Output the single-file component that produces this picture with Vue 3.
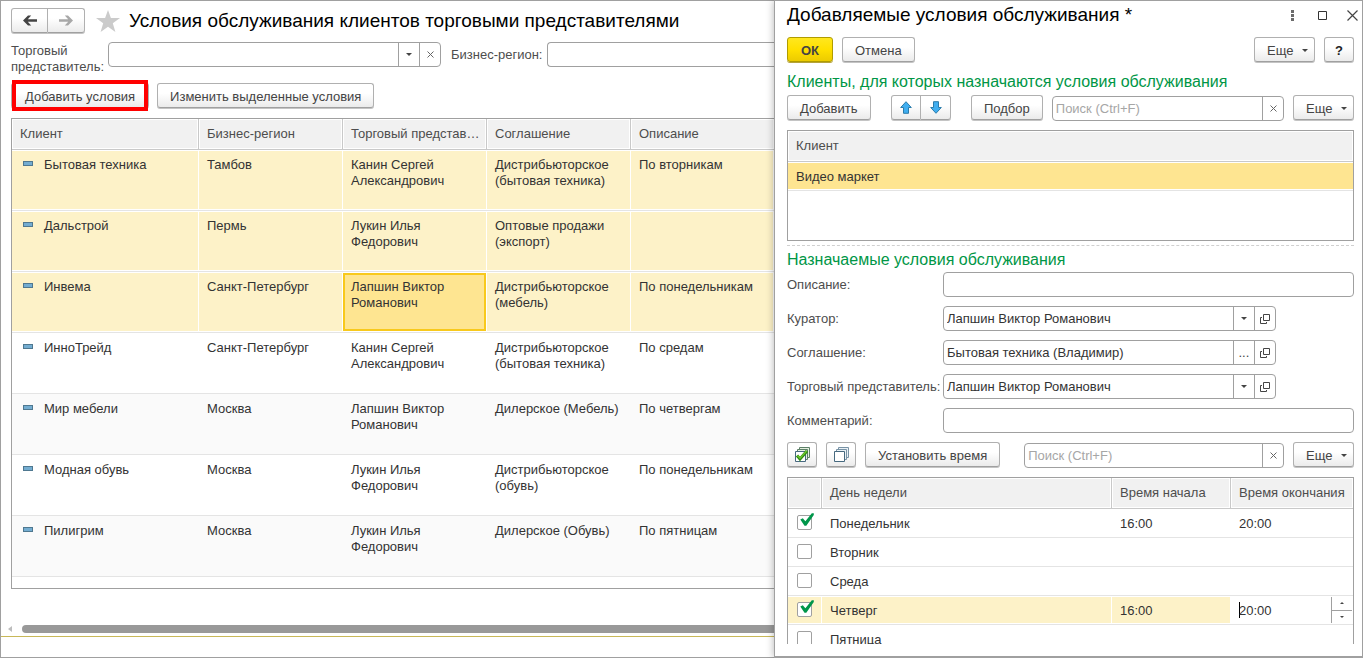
<script setup>
import { ref } from 'vue'

const rows = ref([
  { client: 'Бытовая техника', region: 'Тамбов', agent: 'Канин Сергей Александрович', deal: 'Дистрибьюторское (бытовая техника)', note: 'По вторникам', selected: true },
  { client: 'Дальстрой', region: 'Пермь', agent: 'Лукин Илья Федорович', deal: 'Оптовые продажи (экспорт)', note: '', selected: true },
  { client: 'Инвема', region: 'Санкт-Петербург', agent: 'Лапшин Виктор Романович', deal: 'Дистрибьюторское (мебель)', note: 'По понедельникам', selected: true, current: true },
  { client: 'ИнноТрейд', region: 'Санкт-Петербург', agent: 'Канин Сергей Александрович', deal: 'Дистрибьюторское (бытовая техника)', note: 'По средам' },
  { client: 'Мир мебели', region: 'Москва', agent: 'Лапшин Виктор Романович', deal: 'Дилерское (Мебель)', note: 'По четвергам', alt: true },
  { client: 'Модная обувь', region: 'Москва', agent: 'Лукин Илья Федорович', deal: 'Дистрибьюторское (обувь)', note: 'По понедельникам' },
  { client: 'Пилигрим', region: 'Москва', agent: 'Лукин Илья Федорович', deal: 'Дилерское (Обувь)', note: 'По пятницам', alt: true },
])

const fields = ref([
  { id: 'description', label: 'Описание:', value: '' },
  { id: 'curator', label: 'Куратор:', value: 'Лапшин Виктор Романович', picker: 'list' },
  { id: 'agreement', label: 'Соглашение:', value: 'Бытовая техника (Владимир)', picker: 'dots' },
  { id: 'agent', label: 'Торговый представитель:', value: 'Лапшин Виктор Романович', picker: 'list' },
  { id: 'comment', label: 'Комментарий:', value: '' },
])

const days = ref([
  { name: 'Понедельник', on: true, from: '16:00', to: '20:00' },
  { name: 'Вторник', on: false, from: '', to: '' },
  { name: 'Среда', on: false, from: '', to: '' },
  { name: 'Четверг', on: true, from: '16:00', to: '20:00', editing: true },
  { name: 'Пятница', on: false, from: '', to: '' },
])
</script>

<template>
  <div class="desktop">
    <main class="list-form">
      <header class="nav">
        <div class="pair">
          <button class="btn" type="button" aria-label="Назад">
            <svg width="14" height="11" viewBox="0 0 14 11"><path d="M0 5.500 5 .5H8.200L4.800 4.300H14V6.700H4.800L8.200 10.500H5Z" fill="#444" /></svg>
          </button>
          <button class="btn" type="button" aria-label="Вперед">
            <svg width="14" height="11" viewBox="0 0 14 11"><path d="M14 5.500 9 .5H5.800L9.200 4.300H0V6.700H9.200L5.800 10.500H9Z" fill="#a8a8a8" /></svg>
          </button>
        </div>
        <svg class="star" width="24" height="22" viewBox="0 0 24 22"><path d="M12 0 14.900 8H24L16.800 13.200 19.400 22 12 16.700 4.600 22 7.200 13.200 0 8H9.100Z" fill="#cbcbcb" /></svg>
        <h1>Условия обслуживания клиентов торговыми представителями</h1>
      </header>

      <div class="filters">
        <label class="agent-label" for="filter-agent">Торговый представитель:</label>
        <div class="field agent-filter">
          <input id="filter-agent" type="text">
          <button type="button" aria-label="Выбрать"><i class="caret"></i></button>
          <button type="button" aria-label="Очистить"><svg width="7" height="7" viewBox="0 0 7 7"><path d="M.5.5l6 6M6.500.5l-6 6" stroke="#666" /></svg></button>
        </div>
        <label class="region-label" for="filter-region">Бизнес-регион:</label>
        <div class="field region-filter"><input id="filter-region" type="text"></div>
      </div>

      <div class="actions">
        <button class="btn marked" type="button">Добавить условия</button>
        <button class="btn" type="button">Изменить выделенные условия</button>
      </div>

      <div class="grid-box main-grid">
        <table>
          <colgroup><col class="c-client"><col class="c-mid"><col class="c-mid"><col class="c-mid"><col></colgroup>
          <thead>
            <tr><th>Клиент</th><th>Бизнес-регион</th><th>Торговый представ…</th><th>Соглашение</th><th>Описание</th></tr>
          </thead>
          <tbody>
            <tr v-for="r in rows" :key="r.client" :class="{ selected: r.selected, alt: r.alt }">
              <td class="client"><i class="mark"></i>{{ r.client }}</td>
              <td>{{ r.region }}</td>
              <td :class="{ current: r.current }">{{ r.agent }}</td>
              <td>{{ r.deal }}</td>
              <td>{{ r.note }}</td>
            </tr>
          </tbody>
        </table>
      </div>

      <div class="scroll">
        <svg width="4" height="6" viewBox="0 0 4 6"><path d="M4 0V6L0 3Z" fill="#bdbdbd" /></svg>
        <div class="thumb"></div>
      </div>
      <div class="status"></div>
    </main>

    <section class="dialog" role="dialog" aria-labelledby="dialog-title">
      <header class="caption">
        <h2 id="dialog-title">Добавляемые условия обслуживания *</h2>
        <div class="window-tools">
          <button type="button" aria-label="Меню"><svg width="3" height="11" viewBox="0 0 3 11"><path d="M0 0H3V3H0ZM0 4H3V7H0ZM0 8H3V11H0Z" fill="#6b6b6b" /></svg></button>
          <button type="button" aria-label="Развернуть"><svg width="9" height="9" viewBox="0 0 9 9"><path d="M.5.5H8.500V8.500H.5Z" fill="none" stroke="#333" /></svg></button>
          <button type="button" aria-label="Закрыть"><svg width="11" height="11" viewBox="0 0 11 11"><path d="M.5.5l10 10M10.500.5l-10 10" stroke="#444" stroke-width="1.200" /></svg></button>
        </div>
      </header>

      <div class="bar">
        <button class="btn primary" type="button">ОК</button>
        <button class="btn" type="button">Отмена</button>
        <span class="spacer"></span>
        <button class="btn more" type="button">Еще <i class="caret"></i></button>
        <button class="btn help" type="button">?</button>
      </div>

      <h3 class="clients-title">Клиенты, для которых назначаются условия обслуживания</h3>
      <div class="bar clients-bar">
        <button class="btn add" type="button">Добавить</button>
        <div class="pair arrows">
          <button class="btn" type="button" aria-label="Вверх">
            <svg width="12" height="13" viewBox="0 0 12 13"><path d="M6 .7 11.300 6.500H8.500V12.300H3.500V6.500H.7Z" fill="#40aef0" stroke="#2b7cab" /></svg>
          </button>
          <button class="btn" type="button" aria-label="Вниз">
            <svg width="12" height="13" viewBox="0 0 12 13"><path d="M6 12.300 11.300 6.500H8.500V.7H3.500V6.500H.7Z" fill="#40aef0" stroke="#2b7cab" /></svg>
          </button>
        </div>
        <button class="btn" type="button">Подбор</button>
        <div class="field search">
          <input type="text" placeholder="Поиск (Ctrl+F)" aria-label="Поиск клиента">
          <button type="button" aria-label="Очистить"><svg width="7" height="7" viewBox="0 0 7 7"><path d="M.5.5l6 6M6.500.5l-6 6" stroke="#666" /></svg></button>
        </div>
        <button class="btn more" type="button">Еще <i class="caret"></i></button>
      </div>

      <div class="grid-box clients-grid">
        <table>
          <thead><tr><th>Клиент</th></tr></thead>
          <tbody><tr><td>Видео маркет</td></tr></tbody>
        </table>
      </div>

      <hr>
      <h3>Назначаемые условия обслуживания</h3>
      <div class="form">
        <template v-for="f in fields" :key="f.id">
          <label :for="f.id">{{ f.label }}</label>
          <div class="field" :class="{ short: f.picker }">
            <input :id="f.id" v-model="f.value" type="text">
            <template v-if="f.picker">
              <button type="button" aria-label="Выбрать"><i v-if="f.picker === 'list'" class="caret"></i><span v-else>...</span></button>
              <button type="button" aria-label="Открыть">
                <svg width="10" height="10" viewBox="0 0 10 10"><path d="M3.500.5H9.500V6.500H3.500ZM2 3.500H.5V9.500H6.500V8" fill="none" stroke="#444" /></svg>
              </button>
            </template>
          </div>
        </template>
      </div>

      <div class="bar days-bar">
        <button class="btn icon" type="button" aria-label="Отметить все">
          <svg width="16" height="16" viewBox="0 0 16 16">
            <path d="M5.500 3V.5H15.500V10.500H13M3.500 5V2.500H13.500V12.500H11" fill="#e4f0df" stroke="#5d8068" />
            <path d="M1.500 4.500H11.500V14.500H1.500Z" fill="#fff" stroke="#46697f" />
            <path d="M3 8.500 6 12 13 4" fill="none" stroke="#2d8a12" stroke-width="3" />
            <path d="M3.500 8.500 6 11.300 12.500 4" fill="none" stroke="#6cc72c" stroke-width="1.400" />
          </svg>
        </button>
        <button class="btn icon" type="button" aria-label="Снять отметки">
          <svg width="16" height="16" viewBox="0 0 16 16">
            <path d="M5.500 2V.5H15.500V10.500H14M3.500 4V2.500H13.500V12.500H12" fill="#eaf1f6" stroke="#7893a6" />
            <path d="M1.500 4.500H11.500V14.500H1.500Z" fill="#fff" stroke="#46697f" />
          </svg>
        </button>
        <button class="btn" type="button">Установить время</button>
        <div class="field search">
          <input type="text" placeholder="Поиск (Ctrl+F)" aria-label="Поиск дня">
          <button type="button" aria-label="Очистить"><svg width="7" height="7" viewBox="0 0 7 7"><path d="M.5.5l6 6M6.500.5l-6 6" stroke="#666" /></svg></button>
        </div>
        <button class="btn more" type="button">Еще <i class="caret"></i></button>
      </div>

      <div class="grid-box days-grid">
        <table>
          <colgroup><col class="c-check"><col><col class="c-from"><col class="c-to"></colgroup>
          <thead><tr><th></th><th>День недели</th><th>Время начала</th><th>Время окончания</th></tr></thead>
          <tbody>
            <tr v-for="d in days" :key="d.name" :class="{ selected: d.editing }">
              <td class="check">
                <label>
                  <input v-model="d.on" type="checkbox" :aria-label="d.name">
                  <svg v-if="d.on" width="14" height="14" viewBox="0 0 14 14"><path d="M.3 6.500 2.800 5.200 5.400 8.300 11.800.3H13.800V2L6.300 12.800H4.500Z" fill="#00964a" /></svg>
                </label>
              </td>
              <td>{{ d.name }}</td>
              <td>{{ d.from }}</td>
              <td v-if="d.editing" class="editing">
                <div class="editor">
                  <i class="cursor"></i>
                  <input v-model="d.to" type="text" aria-label="Время окончания">
                  <div class="spin">
                    <button type="button" aria-label="Больше"><i class="tip up"></i></button>
                    <button type="button" aria-label="Меньше"><i class="tip"></i></button>
                  </div>
                </div>
              </td>
              <td v-else>{{ d.to }}</td>
            </tr>
          </tbody>
        </table>
      </div>
    </section>
  </div>
</template>

<style>
body {
  margin: 0;
}
</style>

<style scoped>
* {
  box-sizing: border-box;
}
.desktop {
  display: grid;
  grid-template-columns: 774fr 589fr;
  grid-template-rows: minmax(0, 1fr);
  height: 100vh;
  overflow: hidden;
  background: #fff;
  color: #333;
  font: 13px/16px "Liberation Sans", Arial, sans-serif;
}
h1, h2, h3 {
  margin: 0;
  font-weight: 400;
  white-space: nowrap;
}
h1, h2 {
  color: #000;
  font-size: 19px;
  line-height: 25px;
}
h3 {
  color: #009646;
  font-size: 16px;
  line-height: 20px;
}
label {
  color: #4d4d4d;
}
svg {
  display: block;
  flex: none;
}
button, input {
  margin: 0;
  padding: 0;
  border: 0;
  background: none;
  color: inherit;
  font: inherit;
}

/* List form */
.list-form {
  display: flex;
  flex-direction: column;
  min-width: 0;
  padding-top: 7px;
  border: 1px solid #a0a0a0;
  border-right: 0;
  overflow: hidden;
}
.nav, .filters, .actions {
  display: flex;
  flex: none;
  margin: 0 0 9px 10px;
}
.nav {
  height: 25px;
}
.star {
  margin: 2px 9px 0 11px;
}
.pair {
  display: flex;
}
.pair .btn {
  justify-content: center;
  width: 37px;
  padding: 0;
}
.pair .btn:first-child {
  border-radius: 3px 0 0 3px;
}
.pair .btn:last-child {
  border-left: 0;
  border-radius: 0 3px 3px 0;
}
.filters {
  height: 32px;
}
.agent-label {
  width: 97px;
  padding-top: 1px;
}
.agent-filter {
  width: 333px;
}
.region-label {
  width: 106px;
  padding: 5px 0 0 10px;
}
.filters .region-filter {
  flex: 1;
  border-right: 0;
  border-radius: 4px 0 0 4px;
}
.actions {
  gap: 8px;
}

/* Controls */
.btn {
  display: flex;
  align-items: center;
  flex: none;
  height: 25px;
  margin-bottom: 1px;
  padding: 2px 12px 0;
  border: 1px solid #b0b0b0;
  border-bottom-color: #a0a0a0;
  border-radius: 3px;
  background: linear-gradient(#fff 40%, #ebebeb);
  box-shadow: 0 1px 0 #c4c4c4;
  color: #444;
  white-space: nowrap;
}
.marked {
  position: relative;
  padding: 2px 13px 0;
}
.marked::after {
  content: "";
  position: absolute;
  inset: -4px 0;
  border: 4px solid #f00;
}
.add {
  width: 84px;
}
.primary {
  justify-content: center;
  width: 46px;
  padding: 2px 0 0;
  border-color: #b09c00;
  background: linear-gradient(#ffe71f, #ffe000 50%, #eccb00);
  box-shadow: 0 1px 0 #b5a33a;
  font-weight: 700;
}
.more {
  justify-content: space-between;
  width: 61px;
  padding: 2px 6px 0 12px;
}
.help {
  justify-content: center;
  width: 30px;
  padding: 2px 0 0;
  color: #222;
  font-weight: 700;
}
.icon {
  justify-content: center;
  width: 30px;
  padding: 0;
}
.caret {
  width: 0;
  border: 3px solid transparent;
  border-top-color: #444;
  border-bottom: 0;
}
.field {
  display: flex;
  height: 25px;
  border: 1px solid #a0a0a0;
  border-radius: 4px;
  background: #fff;
}
.field input {
  flex: 1;
  min-width: 0;
  padding: 0 3px;
  outline: 0;
}
.field input::placeholder {
  color: #a6a6a6;
  opacity: 1;
}
.field button {
  display: flex;
  align-items: center;
  justify-content: center;
  width: 21px;
  border-left: 1px solid #a0a0a0;
  color: #444;
}

/* Tables */
.grid-box {
  border: 1px solid #a0a0a0;
  overflow: hidden;
}
table {
  width: 100%;
  border-spacing: 0;
  table-layout: fixed;
}
th, td {
  padding: 0 8px;
  text-align: left;
}
th {
  height: 31px;
  padding-right: 4px;
  border-bottom: 1px solid #c9c9c9;
  background: #f1f1f1;
  box-shadow: inset -1px 0 #c9c9c9, inset -2px 0 #fff, inset 0 0 0 1px #fff;
  color: #4d4d4d;
  font-weight: 400;
  white-space: nowrap;
}
th:last-child {
  box-shadow: inset 0 0 0 1px #fff;
}
td {
  border-bottom: 1px solid #e4e4e4;
}
.selected td {
  background: #fdf2c8;
  box-shadow: inset -1px 0 #fff, inset 0 1px #fff, inset 0 -1px #fff;
}
.alt td {
  background: #fafafa;
}
.main-grid {
  flex: 1;
  min-height: 0;
  margin-left: 10px;
  border-right: 0;
}
.main-grid td {
  height: 61px;
  padding-top: 7px;
  vertical-align: top;
}
.main-grid .current {
  background: #fee591;
  box-shadow: inset -1px 0 #fff, inset 0 1px #fff, inset 0 -1px #fff, inset -3px 0 #f8c91c, inset 2px 0 #f8c91c, inset 0 3px #f8c91c, inset 0 -3px #f8c91c;
}
.c-client {
  width: 187px;
}
.c-mid {
  width: 144px;
}
.mark {
  display: inline-block;
  width: 10px;
  height: 5px;
  margin: 0 11px 3px 3px;
  border: 1px solid #4f7890;
  background: #74add1;
  vertical-align: baseline;
}
.scroll {
  display: flex;
  align-items: center;
  flex: none;
  height: 8px;
  margin: 36px 0 3px 7px;
}
.thumb {
  flex: 1;
  height: 8px;
  margin-left: 10px;
  border-radius: 4px 0 0 4px;
  background: #999;
}
.status {
  flex: none;
  height: 21px;
  border-top: 1px solid #c8b858;
}

/* Dialog */
.dialog {
  display: flex;
  flex-direction: column;
  min-width: 0;
  padding: 1px 8px 12px 12px;
  border: 1px solid #a0a0a0;
  border-bottom-width: 2px;
  background: #fff;
  box-shadow: 0 0 8px rgba(0, 0, 0, .3);
  z-index: 1;
}
.dialog > * {
  flex: none;
}
.caption {
  display: flex;
  justify-content: space-between;
  height: 26px;
  margin-bottom: 9px;
}
.window-tools {
  display: flex;
  align-items: center;
  gap: 10px;
  margin-right: -8px;
}
.window-tools button {
  display: flex;
  align-items: center;
  justify-content: center;
  width: 20px;
  height: 20px;
}
.bar {
  display: flex;
  align-items: flex-end;
  gap: 9px;
}
.spacer {
  flex: 1;
}
.clients-title {
  margin: 9px 0 3px;
}
.arrows {
  margin: 0 11px;
}
.arrows .btn {
  width: 30px;
}
.search {
  flex: 1;
  min-width: 0;
}
.days-bar .search {
  margin-left: 15px;
}
.clients-grid {
  height: 111px;
  margin: 9px 0 4px;
}
.clients-grid td {
  height: 29px;
  padding-top: 2px;
  background: #fee591;
  box-shadow: inset 0 1px #fff, inset 0 -1px #fff;
}
hr {
  width: 100%;
  margin: 0 0 4px;
  border: 0;
  border-top: 1px dashed #d0d0d0;
}
.form {
  display: grid;
  grid-template-columns: 156px 1fr;
  gap: 9px 0;
  align-items: center;
  margin: 2px 0 9px;
}
.form label {
  white-space: nowrap;
}
.short {
  width: 81%;
}
.dialog > .days-grid {
  flex: 1;
  min-height: 0;
  margin-top: 9px;
  border-bottom: 0;
}
.c-check {
  width: 34px;
}
.c-from {
  width: 119px;
}
.c-to {
  width: 122px;
}
.days-grid td {
  height: 29px;
  padding-top: 2px;
}
.days-grid .check {
  padding-top: 0;
}
.check label {
  position: relative;
  display: block;
  width: 15px;
  height: 15px;
  margin: 0 0 2px 1px;
}
.check input {
  display: block;
  width: 15px;
  height: 15px;
  border: 1px solid #a0a0a0;
  border-radius: 2px;
  background: #fff;
  appearance: none;
}
.check svg {
  position: absolute;
  top: -2px;
  left: 3px;
}
.days-grid .editing {
  padding: 0;
  background: #fff;
}
.editor {
  display: flex;
  height: 26px;
  padding-left: 8px;
  align-items: center;
}
.cursor {
  width: 1px;
  height: 16px;
  margin-right: -1px;
  background: #000;
}
.editor input {
  flex: 1;
  min-width: 0;
  padding-top: 2px;
}
.spin {
  display: flex;
  flex-direction: column;
  width: 21px;
  height: 26px;
  margin-right: 1px;
  border-left: 1px solid #a0a0a0;
}
.spin button {
  display: flex;
  flex: 1;
  align-items: center;
  justify-content: center;
}
.spin button + button {
  border-top: 1px solid #a0a0a0;
}
.tip {
  border: 2px solid transparent;
  border-top-color: #444;
  border-bottom: 0;
}
.up {
  transform: rotate(180deg);
}
</style>
